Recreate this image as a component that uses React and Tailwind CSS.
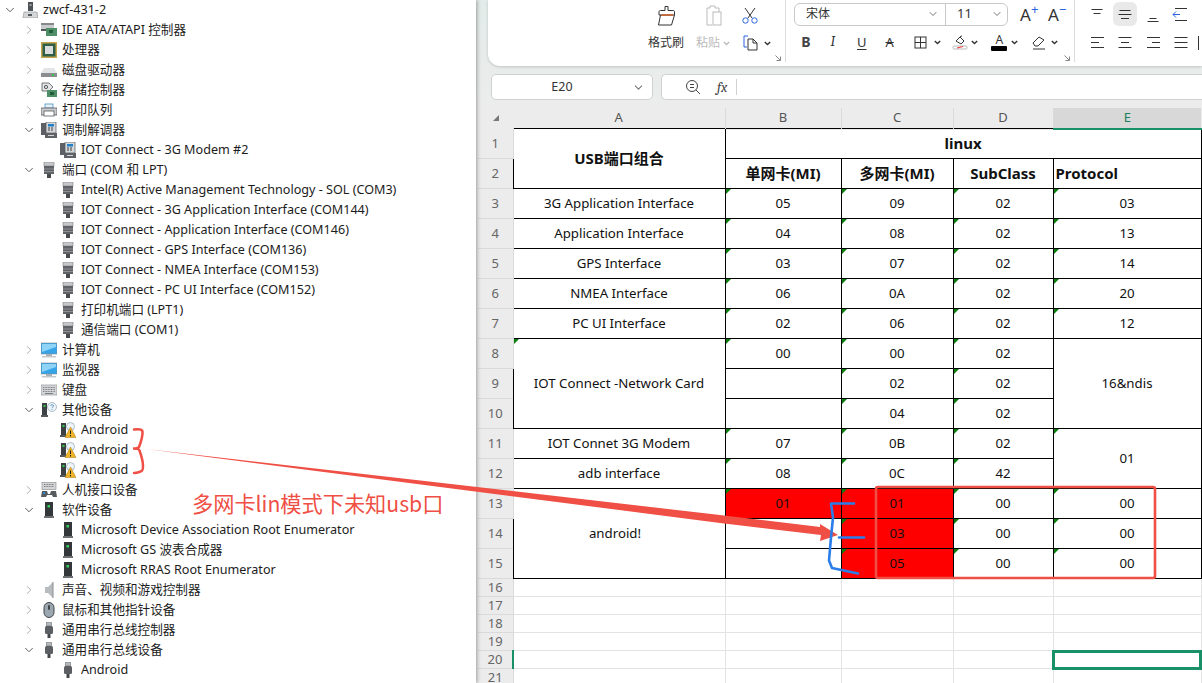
import { ChevronDown, ChevronRight } from 'lucide-react';

const uiFont = { fontFamily: '"Noto Sans", "Noto Sans CJK SC", sans-serif' };

function clsx2(...parts) {
  return parts.filter(Boolean).join(' ');
}

function Svg({ size = 16, w, h, children, className }) {
  const width = w || size;
  const height = h || size;
  return (
    <svg width={width} height={height} viewBox={`0 0 ${width} ${height}`} fill="none" className={clsx2('shrink-0', className)}>
      {children}
    </svg>
  );
}

// device manager icons
const deviceIcons = {
  computer: (
    <Svg>
      <rect x="6" y="0" width="5" height="9" fill="#4d5257" />
      <rect x="7.5" y="2" width="2" height="2" fill="#9fa3a6" />
      <path d="M2 10h13l1 6H1z" fill="#d4d6d8" stroke="#8a8e92" strokeWidth="0.6" />
      <rect x="6" y="12" width="4" height="2" fill="#55595c" />
    </Svg>
  ),
  ide: (
    <Svg>
      <rect x="0" y="3" width="13" height="4" fill="#c9cbcd" />
      <rect x="0" y="1" width="13" height="2" fill="#85898c" />
      <rect x="5" y="6" width="11" height="8" fill="#4f8f68" />
      <rect x="8" y="8" width="4" height="3" fill="#1f5c3a" />
      <rect x="0" y="7" width="5" height="2" fill="#55595c" />
    </Svg>
  ),
  chip: (
    <Svg>
      <rect x="0" y="0" width="16" height="16" fill="#c7a54b" />
      <rect x="1.5" y="1.5" width="13" height="13" fill="#2f5d48" />
      <rect x="4" y="4" width="8" height="8" fill="#d9dbdc" />
    </Svg>
  ),
  disk: (
    <Svg>
      <path d="M3 6h10l3 5H0z" fill="#e3e4e5" />
      <rect x="0" y="11" width="16" height="4" fill="#8b8e90" />
      <rect x="11" y="12" width="2" height="2" fill="#35c04c" />
    </Svg>
  ),
  storage: (
    <Svg>
      <path d="M1 1h7l4 4-4 4H1z" fill="#e3e4e5" stroke="#55595c" strokeWidth="0.8" />
      <circle cx="5" cy="5" r="1.6" stroke="#55595c" />
      <rect x="6" y="8" width="10" height="7" fill="#4f8f68" />
      <rect x="9" y="10" width="4" height="3" fill="#1f5c3a" />
    </Svg>
  ),
  printer: (
    <Svg>
      <rect x="4" y="2" width="8" height="4" fill="#e9f3f8" stroke="#4a90c0" strokeWidth="0.8" />
      <path d="M0 6h16v7H0z" fill="#c8cacc" stroke="#595c5f" strokeWidth="0.8" />
      <rect x="3" y="9" width="10" height="5" fill="#fff" stroke="#595c5f" strokeWidth="0.8" />
    </Svg>
  ),
  modem: (
    <Svg>
      <rect x="0" y="1" width="5" height="12" fill="#5d6165" />
      <rect x="5" y="0" width="10" height="11" fill="#d5d7d9" stroke="#54585b" strokeWidth="0.7" />
      <rect x="7" y="2" width="6" height="2.5" fill="#1f7fc7" />
      <path d="M7 6h2M10 6h2M7 8h2M10 8h2" stroke="#3c4043" />
      <rect x="4" y="11" width="12" height="5" fill="#5e6266" />
      <path d="M7 13.500h6" stroke="#d5d7d9" />
    </Svg>
  ),
  port: (
    <Svg>
      <rect x="3" y="0" width="10" height="4" fill="#c5c7c9" stroke="#7c8083" strokeWidth="0.6" />
      <rect x="3" y="4" width="10" height="8" fill="#5f6367" />
      <path d="M3 7h10M3 9.500h10" stroke="#a2a5a8" strokeWidth="0.7" />
      <rect x="6" y="12" width="4" height="4" fill="#45494c" />
    </Svg>
  ),
  monitor: (
    <Svg>
      <rect x="0" y="1" width="16" height="11" fill="#35a4e8" stroke="#7f8c94" strokeWidth="0.6" />
      <path d="M1 2h14v3L1 10z" fill="#8fd3f6" />
      <rect x="5" y="12" width="6" height="2" fill="#aab0b4" />
      <rect x="1" y="14" width="14" height="1.500" fill="#c4c8cb" />
    </Svg>
  ),
  keyboard: (
    <Svg>
      <rect x="0" y="3" width="16" height="10" fill="#d3d5d7" stroke="#85898c" strokeWidth="0.6" />
      <path d="M2 5.500h12M2 7.500h12M2 9.500h12" stroke="#7b7f82" strokeDasharray="1 0.6" />
      <path d="M4 11.500h8" stroke="#7b7f82" />
    </Svg>
  ),
  other: (
    <Svg>
      <rect x="1" y="1" width="5" height="12" fill="#3d4144" />
      <rect x="2.500" y="3" width="2" height="2" fill="#35c04c" />
      <rect x="0" y="13" width="7" height="2" fill="#55595c" />
      <circle cx="11" cy="5" r="4.500" fill="#eef5fa" stroke="#8fa3b2" strokeWidth="0.7" />
      <path d="M9.500 3.800c.3-1.500 3-1.500 3 .2 0 1-1.500 1-1.500 2.200M11 7.200v.8" stroke="#3e7fb5" strokeWidth="0.8" />
    </Svg>
  ),
  warning: (
    <Svg>
      <rect x="1" y="1" width="5" height="12" fill="#3d4144" />
      <rect x="2.500" y="3" width="2" height="2" fill="#35c04c" />
      <rect x="0" y="13" width="7" height="2" fill="#55595c" />
      <circle cx="10.500" cy="4.500" r="4" fill="#eef5fa" stroke="#8fa3b2" strokeWidth="0.7" />
      <path d="M10.500 5L16 15.500H5z" fill="#f0b429" stroke="#a97a10" strokeWidth="0.5" />
      <path d="M10.500 8.500v3.500M10.500 13v1.500" stroke="#222" />
    </Svg>
  ),
  hid: (
    <Svg>
      <rect x="1" y="0.500" width="14" height="7" fill="#d3d5d7" stroke="#85898c" strokeWidth="0.6" />
      <path d="M3 2.500h10M3 4.500h10" stroke="#7b7f82" strokeDasharray="1 0.6" />
      <path d="M1 9h5l1 3h2l1-3h5l1 6h-4l-1-2H6l-1 2H0z" fill="#555a5e" />
      <rect x="2" y="10" width="2" height="2" fill="#2f87d0" />
    </Svg>
  ),
  soft: (
    <Svg>
      <rect x="4" y="0" width="8" height="14" fill="#33373a" />
      <rect x="6.500" y="3" width="2.500" height="2.500" fill="#35d05a" />
      <rect x="3" y="14" width="10" height="2" fill="#6c7073" />
    </Svg>
  ),
  speaker: (
    <Svg>
      <path d="M4 5h3l5-5v16l-5-5H4z" fill="#b9bcbf" />
      <path d="M12 0v16" stroke="#8a8e91" />
    </Svg>
  ),
  mouse: (
    <Svg>
      <rect x="3" y="0.500" width="10" height="15" rx="5" fill="#9aa6b0" stroke="#3e4448" />
      <rect x="7" y="3" width="2" height="5" rx="1" fill="#3e4448" />
    </Svg>
  ),
  usb: (
    <Svg>
      <rect x="5.500" y="0" width="5" height="4" fill="#b5b8ba" stroke="#6d7174" strokeWidth="0.6" />
      <rect x="4" y="4" width="8" height="8" rx="1.500" fill="#5b5f63" />
      <rect x="6.500" y="12" width="3" height="4" fill="#43474a" />
    </Svg>
  ),
};

const tree = [
  [0, 'open', 'computer', 'zwcf-431-2'],
  [1, 'closed', 'ide', 'IDE ATA/ATAPI 控制器'],
  [1, 'closed', 'chip', '处理器'],
  [1, 'closed', 'disk', '磁盘驱动器'],
  [1, 'closed', 'storage', '存储控制器'],
  [1, 'closed', 'printer', '打印队列'],
  [1, 'open', 'modem', '调制解调器'],
  [2, null, 'modem', 'IOT Connect - 3G Modem #2'],
  [1, 'open', 'port', '端口 (COM 和 LPT)'],
  [2, null, 'port', 'Intel(R) Active Management Technology - SOL (COM3)'],
  [2, null, 'port', 'IOT Connect - 3G Application Interface (COM144)'],
  [2, null, 'port', 'IOT Connect - Application Interface (COM146)'],
  [2, null, 'port', 'IOT Connect - GPS Interface (COM136)'],
  [2, null, 'port', 'IOT Connect - NMEA Interface (COM153)'],
  [2, null, 'port', 'IOT Connect - PC UI Interface (COM152)'],
  [2, null, 'port', '打印机端口 (LPT1)'],
  [2, null, 'port', '通信端口 (COM1)'],
  [1, 'closed', 'monitor', '计算机'],
  [1, 'closed', 'monitor', '监视器'],
  [1, 'closed', 'keyboard', '键盘'],
  [1, 'open', 'other', '其他设备'],
  [2, null, 'warning', 'Android'],
  [2, null, 'warning', 'Android'],
  [2, null, 'warning', 'Android'],
  [1, 'closed', 'hid', '人机接口设备'],
  [1, 'open', 'soft', '软件设备'],
  [2, null, 'soft', 'Microsoft Device Association Root Enumerator'],
  [2, null, 'soft', 'Microsoft GS 波表合成器'],
  [2, null, 'soft', 'Microsoft RRAS Root Enumerator'],
  [1, 'closed', 'speaker', '声音、视频和游戏控制器'],
  [1, 'closed', 'mouse', '鼠标和其他指针设备'],
  [1, 'closed', 'usb', '通用串行总线控制器'],
  [1, 'open', 'usb', '通用串行总线设备'],
  [2, null, 'usb', 'Android'],
];

const levelPad = ['pl-0.5', 'pl-[21px]', 'pl-10'];

function DeviceTree() {
  return (
    <div className="relative z-10 w-[476px] shrink-0 bg-white text-[12.6px] text-[#1c1c1c] shadow-[1px_0_4px_rgba(0,0,0,0.35)]" style={uiFont}>
      {tree.map(([level, state, icon, label], i) => (
        <div key={i} className={clsx2('flex h-5 items-center', levelPad[level])}>
          <span className="flex w-4 justify-center">
            {state === 'open' && <ChevronDown size={14} strokeWidth={1.6} className="text-[#555]" />}
            {state === 'closed' && <ChevronRight size={14} strokeWidth={1.6} className="text-[#aaa]" />}
          </span>
          <span className="ml-1 flex w-4 justify-center">{deviceIcons[icon]}</span>
          <span className="ml-[5px] whitespace-nowrap">{label}</span>
        </div>
      ))}
    </div>
  );
}

function Caret({ gray }) {
  return (
    <svg width="7" height="5" viewBox="0 0 7 5" className="shrink-0">
      <path d="M.8 1l2.700 2.600L6.200 1" fill="none" stroke={gray ? '#bbb' : '#333'} strokeWidth="1.400" />
    </svg>
  );
}

function Launcher() {
  return (
    <svg width="6" height="6" viewBox="0 0 6 6" className="mb-1 self-end">
      <path d="M.5.500L5 5M1.500 5.500h4v-4" fill="none" stroke="#777" strokeWidth="0.9" />
    </svg>
  );
}

// three short lines used by the alignment buttons, widths in px
function Lines({ rows, anchor = 'center', blue }) {
  return (
    <Svg w={18} h={18}>
      {rows.map(([y, len], i) => {
        const x = anchor === 'left' ? 3 : anchor === 'right' ? 16 - len : 9 - len / 2;
        return <path key={i} d={`M${x} ${y}.5h${len}`} stroke="#333" />;
      })}
      {blue && <path d="M1 9.500h7M4 6.500l-3 3 3 3" stroke="#2b63e0" />}
    </Svg>
  );
}

function Ribbon() {
  return (
    <div className="flex h-[66px] items-stretch rounded-bl-xl bg-white pl-[154px] shadow-[0_1px_3px_rgba(0,0,0,0.18)]" style={uiFont}>
      <div className="flex w-[145px] shrink-0 flex-col pr-2 pt-[4px]">
        <div className="flex h-[24px] items-center">
          <span className="flex w-[48px] justify-center pl-[3px]">
            <Svg w={22} h={22}>
              <path d="M8 1.500h3v4h5c1 0 1.500.5 1.500 1.500v3H2V7c0-1 .5-1.500 1.500-1.500H8z" stroke="#333" />
              <path d="M3.500 10l-2 10h13l3-10" stroke="#333" />
              <path d="M4 10h12" stroke="#d2581e" strokeWidth="1.400" />
            </Svg>
          </span>
          <span className="ml-[1px] flex w-[46px] justify-center">
            <Svg w={22} h={22}>
              <path d="M4 3h3V1h5v2h4v4M4 3v17h5" stroke="#bbb" />
              <rect x="10" y="7" width="8" height="13" stroke="#bbb" />
            </Svg>
          </span>
          <span className="flex w-[26px] justify-center">
            <Svg w={18} h={18}>
              <path d="M4 1l7 10M14 1L7 11" stroke="#333" />
              <circle cx="4.500" cy="13.500" r="2.700" stroke="#2b63e0" />
              <circle cx="13.500" cy="13.500" r="2.700" stroke="#2b63e0" />
            </Svg>
          </span>
        </div>
        <div className="ml-[6px] mt-[5px] flex h-[20px] items-center text-[12px] leading-none">
          <span className="w-[48px] text-[#333]">格式刷</span>
          <span className="text-[#bbb]">粘贴</span>
          <span className="ml-[3px]"><Caret gray /></span>
          <span className="ml-[13px]">
            <Svg w={16} h={16}>
              <path d="M5 1H1v11h3" stroke="#2b63e0" />
              <path d="M5 4h5l4 4v7H5zM10 4v4h4" stroke="#333" />
            </Svg>
          </span>
          <span className="ml-[5px]"><Caret /></span>
        </div>
      </div>
      <div className="-ml-[12px] flex items-end pb-[1px] pr-[4px]">
        <Launcher />
      </div>
      <div className="mb-1 w-px bg-[#dcdcdc]" />
      <div className="ml-2 flex w-[268px] shrink-0 flex-col pt-[3px]">
        <div className="flex h-[22px] items-center">
          <div className="flex h-[23px] w-[214px] shrink-0 items-center rounded-md border border-[#c9c9c9] text-[12px] text-[#333]">
            <span className="flex h-full w-[151px] items-center justify-between border-r border-[#c9c9c9] pl-[11px] pr-[6px]">
              宋体
              <ChevronDown size={12} className="text-[#777]" />
            </span>
            <span className="flex flex-1 items-center justify-between pl-[11px] pr-[4px] text-[13px]">
              11
              <ChevronDown size={12} className="text-[#777]" />
            </span>
          </div>
          <span className="ml-[12px] flex w-[28px] shrink-0 text-[17px] leading-none text-[#333]">A<span className="-mt-[3px] text-[13px] leading-none text-[#2b63e0]">+</span></span>
          <span className="flex w-[14px] shrink-0 whitespace-nowrap text-[17px] leading-none text-[#333]">A<span className="-mt-[3px] text-[13px] leading-none text-[#2b63e0]">−</span></span>
        </div>
        <div className="mt-2 flex h-[18px] items-center text-[#333]">
          <span className="w-[24px] text-center text-[14px] font-bold leading-none text-[#444]">B</span>
          <span className="w-[30px] text-center font-serif text-[14px] italic leading-none">I</span>
          <span className="w-[28px] text-center text-[13px] leading-none underline underline-offset-2">U</span>
          <span className="w-[28px] text-center text-[13px] leading-none line-through">A</span>
          <span className="flex w-[48px] items-center pl-[9px]">
            <Svg w={15} h={15}>
              <rect x="2" y="2" width="11" height="11" stroke="#333" />
              <path d="M7.500 2v11M2 7.500h11" stroke="#333" />
            </Svg>
            <span className="ml-[6px]"><Caret /></span>
          </span>
          <span className="flex w-[39px] items-center pl-[1px]">
            <Svg w={16} h={16}>
              <path d="M4 7l4-4 4 4-3 3zM8 3a2 2 0 0 1 2-1" stroke="#333" />
              <rect x="1" y="12" width="14" height="3" rx="1" stroke="#bbb" />
              <path d="M5 14l6-1.500" stroke="#e33" />
            </Svg>
            <span className="ml-[3px]"><Caret /></span>
          </span>
          <span className="flex w-[40px] items-center pl-[1px]">
            <span className="flex w-4 flex-col items-center text-[12px] leading-[11px]">
              A
              <span className="mt-[1px] h-[5px] w-4 rounded-[1px] bg-black" />
            </span>
            <span className="ml-[4px]"><Caret /></span>
          </span>
          <span className="flex w-[32px] items-center pl-[1px]">
            <Svg w={16} h={16}>
              <path d="M2 9l6-6 5 3-6 6H4z" stroke="#333" />
              <path d="M2 15h12" stroke="#333" />
            </Svg>
            <span className="ml-[4px]"><Caret /></span>
          </span>
        </div>
      </div>
      <div className="flex items-end pb-[1px] pl-[2px] pr-[4px]">
        <Launcher />
      </div>
      <div className="mb-1 w-px bg-[#dcdcdc]" />
      <div className="ml-[13px] flex flex-col pt-[2px]">
        <div className="flex h-[24px] items-center gap-[10px]">
          <Lines rows={[[4, 11], [8, 7]]} />
          <span className="-mx-[3px] flex h-6 w-6 items-center justify-center rounded-md bg-[#e9e9e9]">
            <Lines rows={[[5, 11], [9, 13], [13, 8]]} />
          </span>
          <Lines rows={[[13, 7], [16, 11]]} />
          <Lines rows={[[3, 12], [15, 12]]} blue />
        </div>
        <div className="mt-2 flex h-[18px] items-center gap-[10px]">
          <Lines rows={[[3, 13], [8, 8], [13, 13]]} anchor="left" />
          <Lines rows={[[3, 13], [8, 8], [13, 13]]} />
          <Lines rows={[[3, 13], [8, 8], [13, 13]]} anchor="right" />
          <Lines rows={[[3, 13], [8, 13], [13, 13]]} />
          <span className="-ml-[2px] h-[14px] w-px bg-[#333]" />
        </div>
      </div>
    </div>
  );
}

function FormulaBar() {
  return (
    <div className="mt-2 flex h-[26px] gap-2" style={uiFont}>
      <div className="flex w-[162px] shrink-0 items-center rounded-[5px] border border-[#d0d0d0] bg-white text-[12.5px] text-[#333]">
        <span className="w-[140px] text-center">E20</span>
        <ChevronDown size={13} className="text-[#777]" />
      </div>
      <div className="flex flex-1 items-center rounded-l-[5px] border border-r-0 border-[#d0d0d0] bg-white">
        <span className="ml-[23px] w-[18px]">
          <Svg w={16} h={16}>
            <circle cx="7" cy="7" r="5.500" stroke="#444" />
            <path d="M11 11l4 4M5 5.500h4M5 8.500h4" stroke="#444" />
          </Svg>
        </span>
        <span className="ml-[14px] font-serif text-[14px] italic text-[#444]">fx</span>
        <span className="ml-[9px] h-4 w-px bg-[#d0d0d0]" />
      </div>
    </div>
  );
}

const rowNo = 'border-b border-r border-[#dadada] bg-[#ececec] p-0 text-center text-[13px] font-normal leading-none text-[#666]';
const cellBase = 'relative border border-black p-0 pt-px text-center text-[13.25px] leading-none text-[#111]';
const headCell = 'pb-[2px] pt-0 text-[15px] font-bold';
const blankCell = 'border border-[#e3e3e3] p-0';

// small green corner mark of "number stored as text"
function Mark() {
  return <span className="absolute left-0 top-0 h-0 w-0 border-r-[5px] border-t-[5px] border-r-transparent border-t-[#0a7d0a]" />;
}

function Cell({ mark = true, red, rowSpan, colSpan, children, className }) {
  return (
    <td rowSpan={rowSpan} colSpan={colSpan} className={clsx2(cellBase, red && 'bg-[#ff0000]', className)}>
      {mark && <Mark />}
      {children}
    </td>
  );
}

function Sheet() {
  const simple = [
    ['3G Application Interface', '05', '09', '02', '03'],
    ['Application Interface', '04', '08', '02', '13'],
    ['GPS Interface', '03', '07', '02', '14'],
    ['NMEA Interface', '06', '0A', '02', '20'],
    ['PC UI Interface', '02', '06', '02', '12'],
  ];
  return (
    <div className="ml-[2px] mt-2 flex-1 overflow-hidden" style={uiFont}>
      <table className="w-[723px] table-fixed border-collapse">
        <colgroup>
          <col className="w-[35px]" />
          <col className="w-[212px]" />
          <col className="w-[116px]" />
          <col className="w-[112px]" />
          <col className="w-[100px]" />
          <col className="w-[148px]" />
        </colgroup>
        <thead>
          <tr className="h-[20px] text-[13px] text-[#555]">
            <th className="bg-[#ececec] p-0 pl-[14px] text-left">
              <svg width="8" height="8" viewBox="0 0 8 8"><path d="M7 1v6H1z" fill="#777" /></svg>
            </th>
            {['A', 'B', 'C', 'D'].map((c) => (
              <th key={c} className="border-r border-[#dadada] bg-[#ececec] p-0 font-normal">{c}</th>
            ))}
            <th className="border-b-2 border-[#1a9068] bg-[#d8d8d8] p-0 font-normal text-[#1a7f5a]">E</th>
          </tr>
        </thead>
        <tbody className="bg-white">
          <tr className="h-[30px]">
            <th className={rowNo}>1</th>
            <Cell mark={false} rowSpan={2} className={headCell}>USB端口组合</Cell>
            <Cell mark={false} colSpan={4} className={headCell}>linux</Cell>
          </tr>
          <tr className="h-[30px]">
            <th className={rowNo}>2</th>
            <Cell mark={false} className={headCell}>单网卡(MI)</Cell>
            <Cell mark={false} className={headCell}>多网卡(MI)</Cell>
            <Cell mark={false} className={headCell}>SubClass</Cell>
            <Cell mark={false} className={clsx2(headCell, 'pl-[2px] text-left')}>Protocol</Cell>
          </tr>
          {simple.map((r, i) => (
            <tr key={r[0]} className="h-[30px]">
              <th className={rowNo}>{i + 3}</th>
              <Cell mark={false}>{r[0]}</Cell>
              <Cell>{r[1]}</Cell>
              <Cell>{r[2]}</Cell>
              <Cell>{r[3]}</Cell>
              <Cell>{r[4]}</Cell>
            </tr>
          ))}
          <tr className="h-[30px]">
            <th className={rowNo}>8</th>
            <Cell rowSpan={3}>IOT Connect -Network Card</Cell>
            <Cell>00</Cell>
            <Cell>00</Cell>
            <Cell>02</Cell>
            <Cell mark={false} rowSpan={3}>16&amp;ndis</Cell>
          </tr>
          <tr className="h-[30px]">
            <th className={rowNo}>9</th>
            <Cell mark={false} />
            <Cell>02</Cell>
            <Cell>02</Cell>
          </tr>
          <tr className="h-[30px]">
            <th className={rowNo}>10</th>
            <Cell mark={false} />
            <Cell>04</Cell>
            <Cell>02</Cell>
          </tr>
          <tr className="h-[30px]">
            <th className={rowNo}>11</th>
            <Cell mark={false}>IOT Connet 3G Modem</Cell>
            <Cell>07</Cell>
            <Cell>0B</Cell>
            <Cell>02</Cell>
            <Cell rowSpan={2}>01</Cell>
          </tr>
          <tr className="h-[30px]">
            <th className={rowNo}>12</th>
            <Cell mark={false}>adb interface</Cell>
            <Cell>08</Cell>
            <Cell>0C</Cell>
            <Cell>42</Cell>
          </tr>
          <tr className="h-[30px]">
            <th className={rowNo}>13</th>
            <Cell mark={false} rowSpan={3} className="pr-2">android!</Cell>
            <Cell red>01</Cell>
            <Cell red>01</Cell>
            <Cell>00</Cell>
            <Cell>00</Cell>
          </tr>
          <tr className="h-[30px]">
            <th className={rowNo}>14</th>
            <Cell mark={false} />
            <Cell red>03</Cell>
            <Cell>00</Cell>
            <Cell>00</Cell>
          </tr>
          <tr className="h-[30px]">
            <th className={rowNo}>15</th>
            <Cell mark={false} />
            <Cell red>05</Cell>
            <Cell>00</Cell>
            <Cell>00</Cell>
          </tr>
          {[16, 17, 18, 19, 20, 21].map((n) => (
            <tr key={n} className="h-[18px]">
              <th className={clsx2(rowNo, n === 20 && 'border-r-2 border-r-[#1a9068] bg-[#d8d8d8] text-[#1a7f5a]')}>{n}</th>
              <td className={blankCell} />
              <td className={blankCell} />
              <td className={blankCell} />
              <td className={blankCell} />
              <td className={clsx2(blankCell, n === 20 && 'outline-[3px] -outline-offset-2 outline-[#1a9068]')} />
            </tr>
          ))}
        </tbody>
      </table>
    </div>
  );
}

// hand-drawn marks that sit on top of the screenshot
function Annotations() {
  return (
    <>
      <svg className="pointer-events-none absolute left-0 top-0 z-20" width="1202" height="683" viewBox="0 0 1202 683" fill="none">
        <path d="M134 429.500q8-1 8.500 2 .5 5-3.500 15.500-1 1.500-6 1.500 6 0 6.500 2 3.500 10 3.500 15 0 5-1.500 5.500-2 1.500-7.500 2" stroke="#ef4f44" strokeWidth="2.500" strokeLinecap="round" />
        <polygon points="146,449 720,515 820,527 820,524 838,535 820,541 821,535 720,523" fill="#ef4f44" />
        <path d="M854 503.500h-23l2 14-2 20-2 23 3 7.500 26 5.500" stroke="#2b7de9" strokeWidth="2.600" strokeLinejoin="round" strokeLinecap="round" />
        <path d="M839 537.500h25" stroke="#2b7de9" strokeWidth="2.600" strokeLinecap="round" />
        <rect x="876" y="487" width="279" height="91" rx="2" stroke="#ef4f44" strokeWidth="2.600" />
      </svg>
      <div className="absolute left-[192px] top-[487px] z-20 whitespace-nowrap text-[21.2px] text-[#ef4f44]" style={{ fontFamily: '"Noto Sans CJK SC", "Noto Sans", sans-serif' }}>
        多网卡lin模式下未知usb口
      </div>
    </>
  );
}

export default function App() {
  return (
    <div className="relative flex h-[683px] w-[1202px] overflow-hidden bg-[linear-gradient(#e3ecea,#ececec_110px)]">
      <DeviceTree />
      <div className="flex min-w-0 flex-1 flex-col overflow-hidden">
        <div className="ml-3"><Ribbon /></div>
        <div className="ml-[15px]"><FormulaBar /></div>
        <Sheet />
      </div>
      <Annotations />
    </div>
  );
}
